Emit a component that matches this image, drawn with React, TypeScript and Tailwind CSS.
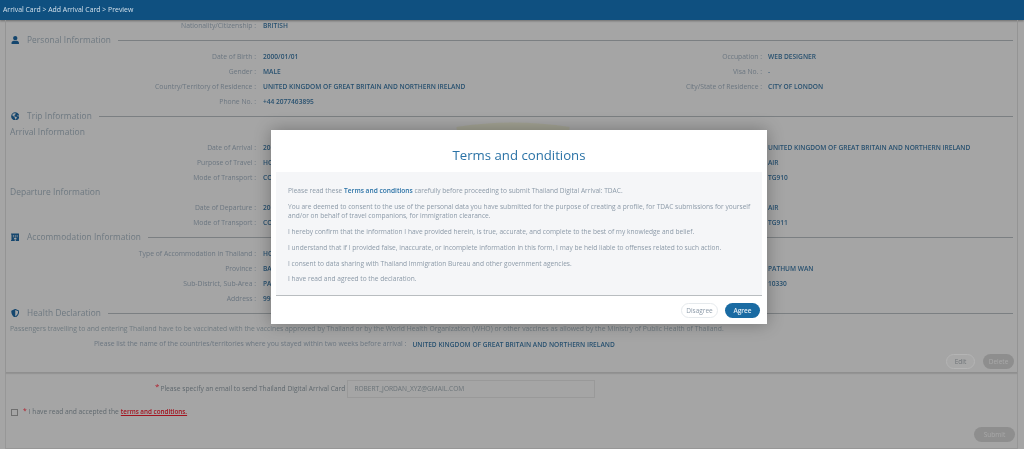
import React from "react";
import { FaUser, FaGlobeAmericas, FaHotel, FaShieldAlt } from "react-icons/fa";

const font = { fontFamily: '"Open Sans", "Liberation Sans", sans-serif' };

function Row({ l, v, rl, rv }: { l: string; v?: string; rl?: string; rv?: string }) {
  return (
    <div className="flex h-[15px] items-center text-[6.8px] leading-[15px] whitespace-nowrap">
      <div className="w-[250px] shrink-0 text-right text-[#6b7680]">{l} :</div>
      <div className="ml-[7px] w-[250px] shrink-0 text-[6.6px] font-semibold text-[#27506f]">{v}</div>
      <div className="w-[249px] shrink-0 text-right text-[#6b7680]">{rl ? `${rl} :` : ""}</div>
      <div className="ml-[6px] text-[6.6px] font-semibold text-[#27506f]">{rv}</div>
    </div>
  );
}

function Section({ icon, title }: { icon: React.ReactNode; title: string }) {
  return (
    <div className="flex h-[15px] items-center pl-[4px] pr-[4px]">
      <div className="flex w-[17px] shrink-0 items-center justify-center pr-[7px] text-[8.5px] text-[#14466e]">{icon}</div>
      <div className="text-[8.3px] tracking-[0.1px] text-[#6d7880] whitespace-nowrap">{title}</div>
      <div className="ml-[7px] h-px flex-1 bg-[#7b7f82]" />
    </div>
  );
}

function Sub({ title }: { title: string }) {
  return <div className="flex h-[15px] items-center pl-[4px] text-[8.5px] text-[#6d7880]">{title}</div>;
}

export default function App() {
  return (
    <div className="relative h-[449px] w-[1024px] overflow-hidden bg-[#a5a5a5] blur-[0.35px]" style={font}>
      <header className="flex h-[20px] items-center bg-[#0f5080] pl-[3px] text-[6.9px] text-[#d3e0ea] shadow-[0_1px_2px_rgba(0,0,0,0.35)]">
        Arrival Card &gt; Add Arrival Card &gt; Preview
      </header>

      <main className="ml-[5px] mr-[6px] flex h-[429px] flex-col border-x border-b border-[#979797]">
        <div className="h-[353px] border-b border-[#8f8f8f] shadow-[0_1px_1px_rgba(0,0,0,0.1)]">
          <div className="h-[12.5px] overflow-hidden">
            <div className="-mt-[2.5px]">
              <Row l="Nationality/Citizenship" v="BRITISH" />
            </div>
          </div>
          <Section icon={<FaUser />} title="Personal Information" />
          <div className="h-px" />
          <Row l="Date of Birth" v="2000/01/01" rl="Occupation" rv="WEB DESIGNER" />
          <Row l="Gender" v="MALE" rl="Visa No." rv="-" />
          <Row l="Country/Territory of Residence" v="UNITED KINGDOM OF GREAT BRITAIN AND NORTHERN IRELAND" rl="City/State of Residence" rv="CITY OF LONDON" />
          <Row l="Phone No." v="+44 2077463895" />
          <Section icon={<FaGlobeAmericas />} title="Trip Information" />
          <div className="h-px" />
          <Sub title="Arrival Information" />
          <Row l="Date of Arrival" v="20" rv="UNITED KINGDOM OF GREAT BRITAIN AND NORTHERN IRELAND" />
          <Row l="Purpose of Travel" v="HO" rv="AIR" />
          <Row l="Mode of Transport" v="CO" rv="TG910" />
          <Sub title="Departure Information" />
          <Row l="Date of Departure" v="20" rv="AIR" />
          <Row l="Mode of Transport" v="CO" rv="TG911" />
          <Section icon={<FaHotel />} title="Accommodation Information" />
          <div className="h-px" />
          <Row l="Type of Accommodation in Thailand" v="HO" />
          <Row l="Province" v="BA" rv="PATHUM WAN" />
          <Row l="Sub-District, Sub-Area" v="PA" rv="10330" />
          <Row l="Address" v="99" />
          <Section icon={<FaShieldAlt />} title="Health Declaration" />
          <p className="pl-[4px] pt-[3.5px] text-[6.82px] leading-[10px] whitespace-nowrap text-[#6f7a80]">
            Passengers travelling to and entering Thailand have to be vaccinated with the vaccines approved by Thailand or by the World Health Organization (WHO) or other vaccines as allowed by the Ministry of Public Health of Thailand.
          </p>
          <div className="flex h-[21px] items-center pl-[88px] text-[6.84px] whitespace-nowrap">
            <span className="text-[#6b7680]">Please list the name of the countries/territories where you stayed within two weeks before arrival :</span>
            <span className="ml-[6px] text-[6.6px] font-semibold text-[#27506f]">UNITED KINGDOM OF GREAT BRITAIN AND NORTHERN IRELAND</span>
          </div>
          <div className="-mt-px flex justify-end gap-[8px] pr-[3px]">
            <button className="h-[15px] w-[29px] rounded-full border border-[#b4b4b4] bg-[#a8a8a8] text-[6.5px] text-[#6f7478]">Edit</button>
            <button className="h-[15px] w-[31px] rounded-full bg-[#8e8e8e] text-[6.5px] text-[#a9a9a9]">Delete</button>
          </div>
        </div>

        <div className="flex items-center pl-[149px] pt-[7px]">
          <span className="self-start pt-[2px] text-[8px] leading-[8px] text-[#b01c2a]">*</span>
          <span className="ml-[1px] w-[187px] text-[6.7px] whitespace-nowrap text-[#5f686e]">Please specify an email to send Thailand Digital Arrival Card</span>
          <div className="flex h-[18px] w-[248px] items-center border border-[#999999] bg-[#a5a5a5] pl-[6px] text-[6.6px] text-[#6a7378]">
            ROBERT_JORDAN_XYZ@GMAIL.COM
          </div>
        </div>

        <div className="mt-[7px] flex h-[14px] items-center pl-[5px] text-[6.7px]">
          <div className="h-[7px] w-[7px] border border-[#6f6f6f]" />
          <span className="ml-[5px] text-[#b01c2a]">*</span>
          <span className="ml-[2px] text-[#5f686e]">I have read and accepted the</span>
          <span className="ml-[2px] text-[6.3px] font-semibold text-[#a3131f] underline">terms and conditions.</span>
        </div>

        <div className="mt-[8px] flex justify-end pr-[2px]">
          <button className="h-[15px] w-[41px] rounded-full bg-[#8e8e8e] text-[6.5px] text-[#a9a9a9]">Submit</button>
        </div>
      </main>

      <svg className="absolute left-[455px] top-[116px]" width="116" height="16" viewBox="0 0 116 16" aria-hidden="true">
        <path d="M2 15 Q58 6 114 15" fill="none" stroke="#a09f8a" strokeWidth="8" opacity="0.7" />
      </svg>

      <section className="absolute left-[271px] top-[130px] flex h-[194px] w-[496px] flex-col bg-white shadow-[0_0_16px_rgba(0,0,0,0.3)]">
        <h2 className="flex h-[42px] items-center justify-center pt-[10px] text-[13.2px] font-medium text-[#2a72a6]">Terms and conditions</h2>
        <div className="mx-[5px] h-[124px] border-b border-[#b9bdc0] bg-[#f5f6f8] pl-[12px] pr-[6px] pt-[14px] text-[6.6px] leading-[9.5px] text-[#8c9aa8]">
          <p className="mb-[6.3px]">
            Please read these <span className="font-semibold text-[#2a72a6]">Terms and conditions</span> carefully before proceeding to submit Thailand Digital Arrival: TDAC.
          </p>
          <p className="mb-[6.3px]">
            You are deemed to consent to the use of the personal data you have submitted for the purpose of creating a profile, for TDAC submissions for yourself and/or on behalf of travel companions, for immigration clearance.
          </p>
          <p className="mb-[6.3px]">I hereby confirm that the information I have provided herein, is true, accurate, and complete to the best of my knowledge and belief.</p>
          <p className="mb-[6.3px]">I understand that if I provided false, inaccurate, or incomplete information in this form, I may be held liable to offenses related to such action.</p>
          <p className="mb-[6.3px]">I consent to data sharing with Thailand Immigration Bureau and other government agencies.</p>
          <p>I have read and agreed to the declaration.</p>
        </div>
        <div className="flex flex-1 items-center justify-end gap-[7px] pr-[7px] pt-[1px]">
          <button className="h-[15px] w-[37px] rounded-full border border-[#e6eaed] bg-white text-[6.5px] text-[#8c9aa8]">Disagree</button>
          <button className="h-[15px] w-[35px] rounded-full bg-[#1a6ba3] text-[6.5px] font-semibold text-[#e4eef5]">Agree</button>
        </div>
      </section>
    </div>
  );
}
